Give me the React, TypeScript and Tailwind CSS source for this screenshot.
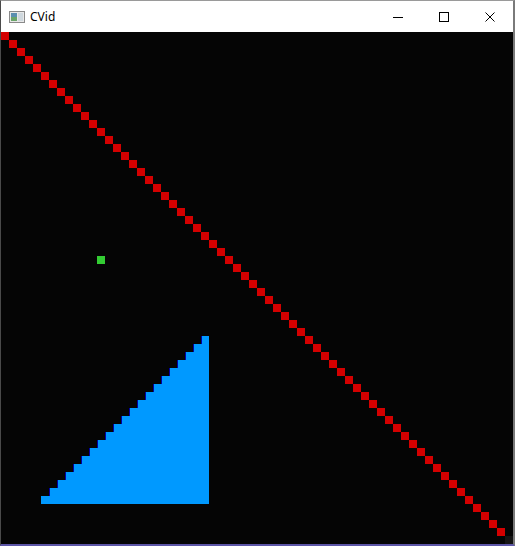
import React from 'react'

const BLOCK = 8

// 64x64 grid of 8px cells
const diagonal = Array.from({ length: 64 }, (_, i) => i)
const triangleRows = Array.from({ length: 21 }, (_, r) => r)

function AppIcon() {
  return (
    <svg width="16" height="12" viewBox="0 0 16 12" className="shrink-0">
      <rect x="0.5" y="0.5" width="15" height="11" fill="#e8e8e8" stroke="#8a8a8a" />
      <rect x="2" y="2" width="6" height="8" fill="#5b8fb0" />
      <rect x="2" y="6" width="6" height="4" fill="#6aa56a" />
      <rect x="9" y="2" width="5" height="8" fill="#cfd8de" />
    </svg>
  )
}

function CaptionButton({ children }: { children: React.ReactNode }) {
  return <div className="flex h-full w-[46px] items-center justify-center">{children}</div>
}

function Canvas() {
  return (
    <svg width="512" height="512" viewBox="0 0 512 512" shapeRendering="crispEdges" className="block">
      <rect width="512" height="512" fill="#050505" />

      {/* red diagonal */}
      {diagonal.map((i) => (
        <rect
          key={i}
          x={i * BLOCK}
          y={i * BLOCK}
          width={BLOCK}
          height={BLOCK}
          fill={i === 63 ? '#141414' : '#d40000'}
        />
      ))}

      {/* green dot */}
      <rect x={96} y={224} width={BLOCK} height={BLOCK} fill="#33cc33" />

      {/* blue stair triangle */}
      {triangleRows.map((r) => {
        const x = 200 - r * BLOCK
        return (
          <g key={r}>
            <rect x={x} y={304 + r * BLOCK} width={208 - x} height={BLOCK} fill="#0099ff" />
            {r < 20 && <rect x={x} y={304 + r * BLOCK} width={1} height={BLOCK} fill="#0000a8" />}
          </g>
        )
      })}
    </svg>
  )
}

export default function App() {
  return (
    <div className="flex h-[546px] w-[515px] flex-col border-t border-l border-r-2 border-b-2 border-t-[#9a9a9a] border-l-[#4a4a4a] border-r-[#7a7a7a] border-b-[#5d56a8] bg-white">
      {/* title bar */}
      <div className="flex h-[31px] shrink-0 items-center bg-white pl-2 font-['Noto_Sans','Liberation_Sans',sans-serif] text-[12px] text-black">
        <AppIcon />
        <span className="ml-[5px] leading-none">CVid</span>
        <div className="ml-auto flex h-full">
          <CaptionButton>
            <svg width="10" height="10" viewBox="0 0 10 10" shapeRendering="crispEdges">
              <rect x="0" y="5" width="10" height="1" fill="#000" />
            </svg>
          </CaptionButton>
          <CaptionButton>
            <svg width="10" height="10" viewBox="0 0 10 10" shapeRendering="crispEdges">
              <rect x="0.5" y="0.5" width="9" height="9" fill="none" stroke="#000" />
            </svg>
          </CaptionButton>
          <CaptionButton>
            <svg width="10" height="10" viewBox="0 0 10 10">
              <path d="M0.5 0.5 L9.5 9.5 M9.5 0.5 L0.5 9.5" stroke="#000" strokeWidth="1" />
            </svg>
          </CaptionButton>
        </div>
      </div>

      {/* drawing surface */}
      <Canvas />
    </div>
  )
}
